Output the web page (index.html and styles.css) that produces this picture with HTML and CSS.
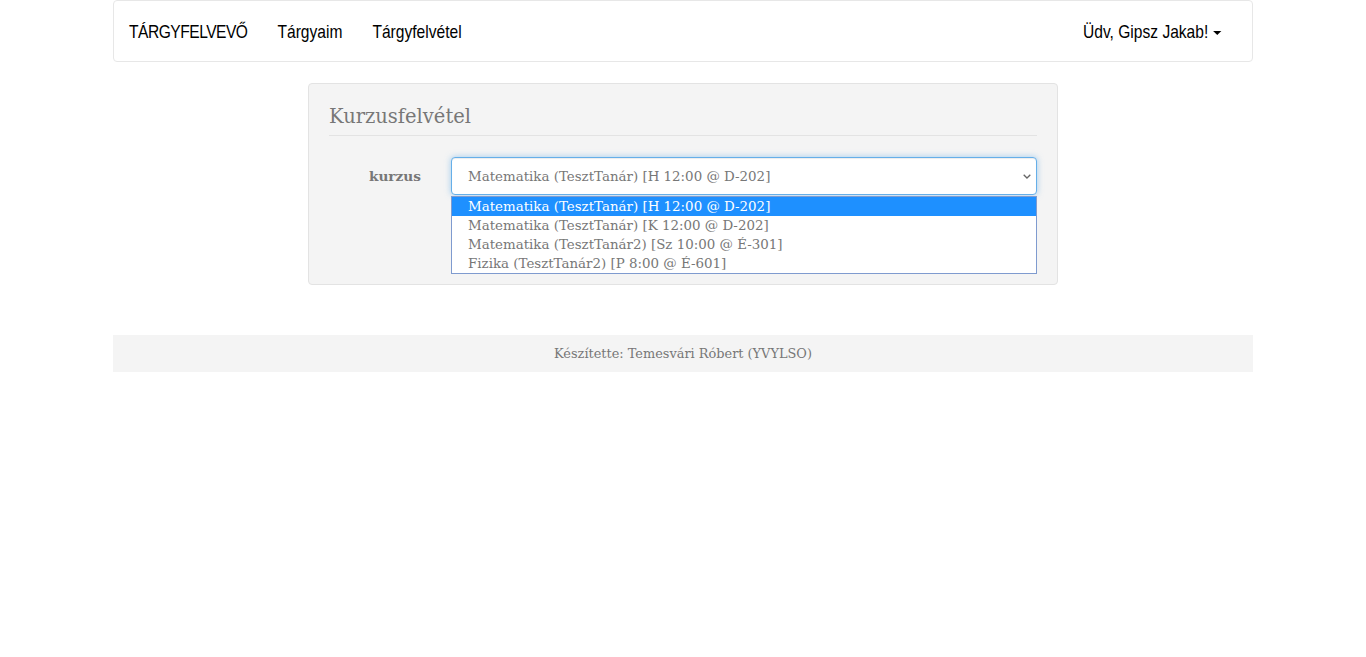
FILE: index.html
```html
<!DOCTYPE html>
<html lang="hu">
<head>
<meta charset="utf-8">
<title>Tárgyfelvevő</title>
<link rel="stylesheet" href="styles.css">
</head>
<body>
<nav class="navbar">
  <div class="nav-left">
    <a class="brand" href="#">TÁRGYFELVEVŐ</a>
    <a class="nav-link" href="#">Tárgyaim</a>
    <a class="nav-link" href="#">Tárgyfelvétel</a>
  </div>
  <div class="nav-right">
    <a class="nav-link user" href="#">Üdv, Gipsz Jakab! <span class="caret"></span></a>
  </div>
</nav>

<main class="well">
  <form class="form">
    <h2 class="legend">Kurzusfelvétel</h2>
    <div class="form-row">
      <label class="label" for="kurzus">kurzus</label>
      <div class="select-wrap">
        <select id="kurzus" class="select">
          <option>Matematika (TesztTanár) [H 12:00 @ D-202]</option>
          <option>Matematika (TesztTanár) [K 12:00 @ D-202]</option>
          <option>Matematika (TesztTanár2) [Sz 10:00 @ É-301]</option>
          <option>Fizika (TesztTanár2) [P 8:00 @ É-601]</option>
        </select>
        <svg class="chev" width="8" height="5" viewBox="0 0 8 5"><path d="M0.7 0.7 L4 4 L7.3 0.7" fill="none" stroke="#666" stroke-width="1.3"/></svg>
        <ul class="dropdown">
          <li class="opt active">Matematika (TesztTanár) [H 12:00 @ D-202]</li>
          <li class="opt">Matematika (TesztTanár) [K 12:00 @ D-202]</li>
          <li class="opt">Matematika (TesztTanár2) [Sz 10:00 @ É-301]</li>
          <li class="opt">Fizika (TesztTanár2) [P 8:00 @ É-601]</li>
        </ul>
      </div>
    </div>
  </form>
</main>

<footer class="footer">Készítette: Temesvári Róbert (YVYLSO)</footer>
</body>
</html>
```

FILE: styles.css
```css
* { box-sizing: border-box; }

body {
  margin: 0;
  font-family: "DejaVu Serif", "Liberation Serif", serif;
  color: #777;
  background: #fff;
}

.navbar {
  width: 1140px;
  height: 62px;
  margin: 0 auto 21px;
  border: 1px solid #e7e7e7;
  border-radius: 4px;
  background: #fff;
  display: flex;
  justify-content: space-between;
  align-items: center;
  font-family: "Liberation Sans", "Arial", sans-serif;
  font-size: 19px;
}

.nav-left, .nav-right {
  display: flex;
  align-items: center;
  transform: scaleX(0.82);
}

.nav-left { transform-origin: left center; }
.nav-right { transform-origin: right center; margin-right: 15px; }

.brand, .nav-link {
  color: #000;
  text-decoration: none;
  padding: 2px 18.3px 0;
  line-height: 58px;
}

.brand { letter-spacing: -0.6px; }

.caret {
  display: inline-block;
  width: 0;
  height: 0;
  margin-left: 1px;
  vertical-align: middle;
  border-top: 4px solid #000;
  border-left: 5px solid transparent;
  border-right: 5px solid transparent;
}

.well {
  display: block;
  width: 750px;
  margin: 0 auto 50px;
  padding: 19px 20px 89px;
  background: #f4f4f4;
  border: 1px solid #e3e3e3;
  border-radius: 4px;
}

.legend {
  margin: 0 0 21px;
  padding-bottom: 4px;
  border-bottom: 1px solid #e3e3e3;
  font-size: 19.5px;
  font-weight: normal;
  color: #777;
  line-height: 28px;
}

.form-row {
  display: flex;
  align-items: center;
  gap: 30px;
}

.label {
  width: 92px;
  text-align: right;
  font-weight: bold;
  font-size: 13.7px;
}

.select-wrap {
  position: relative;
  flex: 1;
}

.select {
  display: block;
  width: 100%;
  height: 38px;
  padding: 0 30px 0 16px;
  font-family: inherit;
  font-size: 13.4px;
  color: #777;
  background: #fff;
  border: 1px solid #66afe9;
  border-radius: 4px;
  box-shadow: inset 0 1px 1px rgba(0,0,0,.075), 0 0 6px rgba(102,175,233,.6);
  appearance: none;
  -webkit-appearance: none;
  outline: none;
}

.chev {
  position: absolute;
  right: 6px;
  top: 17px;
}

.dropdown {
  position: absolute;
  left: 0;
  right: 0;
  top: 39px;
  margin: 0;
  padding: 0;
  list-style: none;
  background: #fff;
  border: 1px solid #7f9bcf;
}

.opt {
  height: 19px;
  line-height: 19px;
  padding-left: 16px;
  font-size: 13.4px;
  color: #777;
  white-space: nowrap;
}

.opt.active {
  background: #1e90ff;
  color: #fff;
}

.footer {
  width: 1140px;
  margin: 0 auto;
  height: 37px;
  line-height: 37px;
  background: #f4f4f4;
  text-align: center;
  font-size: 12.9px;
  color: #777;
}
```
